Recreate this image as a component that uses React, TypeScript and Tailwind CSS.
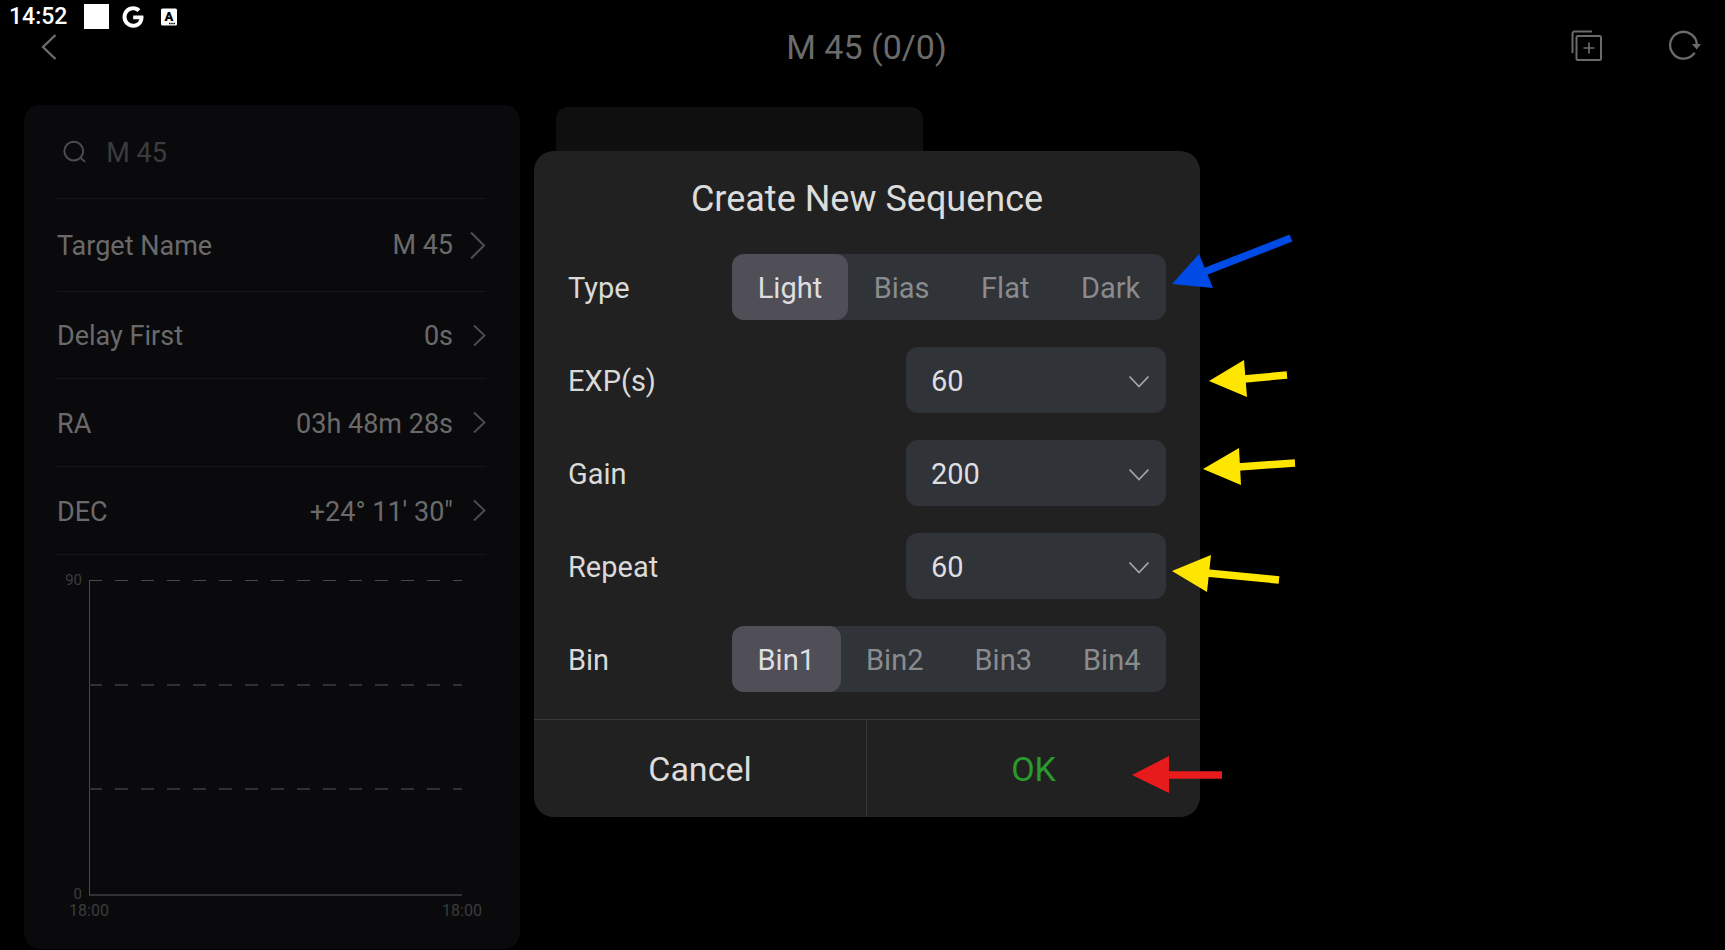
import { useState } from "react";
import { FaGoogle } from "react-icons/fa";

const targetRows = [
  { label: "Target Name", value: "M 45", height: "h-[93px]", large: true },
  { label: "Delay First", value: "0s", height: "h-[87px]", large: false },
  { label: "RA", value: "03h 48m 28s", height: "h-[88px]", large: false },
  { label: "DEC", value: "+24° 11' 30\"", height: "h-[88px]", large: false },
];

const arrows = [
  { color: "#004be6", head: "638,133 665,103 679,137", from: [670, 121], to: [757, 87] },
  { color: "#ffe600", head: "675,230 710,209 713,246", from: [710, 228], to: [753, 224] },
  { color: "#ffe600", head: "669,318 705,297 707,334", from: [704, 316], to: [761, 312] },
  { color: "#ffe600", head: "638,420 677,404 673,441", from: [673, 422], to: [745, 429] },
  { color: "#e81b1c", head: "598,624 635,605 635,642", from: [633, 624], to: [688, 624] },
];

function StatusBar() {
  return (
    <div className="flex h-[29px] items-center pt-1 pl-[9px] text-white">
      <span className="text-[23px] leading-6 font-medium">14:52</span>
      <span className="ml-[17px] size-[25px] bg-white" />
      <FaGoogle className="ml-[13px] size-[22px]" />
      <svg className="ml-[17px]" width="16" height="18" viewBox="0 0 16 18">
        <rect width="16" height="17" y="0.5" rx="1.5" fill="#fff" />
        <text x="8" y="13" textAnchor="middle" fontSize="13" fontWeight="900" fill="#000">
          A
        </text>
        <path d="M8 15.5h6" stroke="#000" strokeWidth="1.5" strokeDasharray="1.5 0.7" />
      </svg>
    </div>
  );
}

function Header() {
  return (
    <header className="grid h-9 grid-cols-[1fr_auto_1fr] items-center pr-6 pl-8 text-[#6b6b6b]">
      <button type="button" aria-label="Back" className="justify-self-start pl-2">
        <svg width="18" height="28" viewBox="0 0 18 28" fill="none" stroke="currentColor" strokeWidth="2.4">
          <path d="M15.5 2 3 14l12.5 12" />
        </svg>
      </button>
      <h1 className="text-[34px] leading-9">M 45 (0/0)</h1>
      <div className="flex items-center justify-self-end pb-1">
        <button type="button" aria-label="Add sequence" className="mr-[66px]">
          <svg width="31" height="31" viewBox="0 0 31 31" fill="none" stroke="currentColor" strokeWidth="2">
            <path d="M21 1.5H3.5a2 2 0 0 0-2 2V23" />
            <rect x="5.5" y="6" width="24.5" height="24" rx="1.5" />
            <path d="M18 12.5v11M12.5 18h11" strokeWidth="1.7" />
          </svg>
        </button>
        <button type="button" aria-label="Refresh">
          <svg width="33" height="31" viewBox="0 0 33 31" fill="none" stroke="currentColor" strokeWidth="2.3">
            <path d="M26.7 22.6A13.4 13.4 0 1 1 28.9 15" />
            <path d="M24 14h9l-4.3 5.5z" fill="currentColor" stroke="none" />
          </svg>
        </button>
      </div>
    </header>
  );
}

function AltitudeChart() {
  return (
    <svg className="mt-4 w-full" viewBox="0 0 429 360" fill="none">
      <path d="M32.5 9v315" stroke="#4a4a4b" />
      <path d="M32 324h373" stroke="#3f3f40" strokeWidth="1.5" />
      <path d="M32 9.5h373" strokeDasharray="13 13" stroke="#4a4a4b" />
      <path d="M32 114h373M32 218h373" strokeDasharray="13 13" strokeWidth="2" stroke="#313132" />
      <g fill="#3c3c3d" fontSize="15">
        <text x="25" y="14" textAnchor="end">90</text>
        <text x="25" y="328" textAnchor="end">0</text>
        <text x="32" y="345" textAnchor="middle" fontSize="16">18:00</text>
        <text x="405" y="345" textAnchor="middle" fontSize="16">18:00</text>
      </g>
    </svg>
  );
}

function TargetPanel() {
  return (
    <section className="w-[496px] shrink-0 rounded-2xl bg-[#0a0a0c] pr-[34px] pb-[18px] pl-[33px] text-[27px] leading-8 text-[#6a6a6b]">
      <label className="flex h-[94px] items-center border-b border-[#171718] pl-[6px]">
        <svg width="26" height="26" viewBox="0 0 26 26" fill="none" stroke="#4c4c4d" strokeWidth="2.2">
          <circle cx="12" cy="12" r="10.5" />
          <path d="m19 19 5.5 5" />
        </svg>
        <input
          aria-label="Search target"
          defaultValue="M 45"
          className="ml-5 w-full min-w-0 bg-transparent pt-[2px] text-[#3c3c3d] outline-none"
        />
      </label>
      {targetRows.map((row) => (
        <button
          key={row.label}
          type="button"
          className={`flex w-full items-center justify-between border-b border-[#171718] ${row.height}`}
        >
          <span className="pt-[2px]">{row.label}</span>
          <span className="flex items-center">
            <span className={row.large ? "" : "pt-[2px]"}>{row.value}</span>
            {row.large ? (
              <svg className="ml-4" width="17" height="29" viewBox="0 0 17 29" fill="none" stroke="#4f4f50" strokeWidth="2">
                <path d="m2 1.5 13 13-13 13" />
              </svg>
            ) : (
              <svg className="ml-5" width="13" height="23" viewBox="0 0 13 23" fill="none" stroke="#4f4f50" strokeWidth="1.8">
                <path d="m1 1.5 10.5 10L1 21.5" />
              </svg>
            )}
          </span>
        </button>
      ))}
      <AltitudeChart />
    </section>
  );
}

function Segmented({ name, options }: { name: string; options: string[] }) {
  const [selected, setSelected] = useState(options[0]);

  return (
    <div className="flex h-[66px] items-center justify-between">
      <span id={name} className="pt-1">{name}</span>
      <div role="radiogroup" aria-labelledby={name} className="flex h-full w-[434px] rounded-xl bg-[#303337]">
        {options.map((option) => (
          <label
            key={option}
            className={`flex flex-auto cursor-pointer items-center justify-center rounded-xl pt-1 ${
              option === selected ? "bg-[#504f57] text-[#dedee0]" : "text-[#8a8b8d]"
            }`}
          >
            <input
              type="radio"
              name={name}
              checked={option === selected}
              onChange={() => setSelected(option)}
              className="sr-only"
            />
            {option}
          </label>
        ))}
      </div>
    </div>
  );
}

function Dropdown({ label, value }: { label: string; value: string }) {
  return (
    <div className="flex h-[66px] items-center justify-between">
      <label htmlFor={label} className="pt-1">{label}</label>
      <div className="relative h-full w-[260px]">
        <select
          id={label}
          defaultValue={value}
          className="h-full w-full appearance-none rounded-xl bg-[#303337] px-[25px] pt-1 text-[#dedee0] outline-none"
        >
          <option>{value}</option>
        </select>
        <svg
          className="pointer-events-none absolute top-7 right-4"
          width="22"
          height="13"
          viewBox="0 0 22 13"
          fill="none"
          stroke="#a3a4a6"
          strokeWidth="1.8"
        >
          <path d="m1.5 1.5 9.5 10 9.5-10" />
        </svg>
      </div>
    </div>
  );
}

function Arrows() {
  return (
    <svg className="pointer-events-none absolute top-0 left-0 overflow-visible" width="666" height="666" aria-hidden="true">
      {arrows.map(({ color, head, from, to }) => (
        <g key={head} fill={color} stroke={color}>
          <polygon points={head} stroke="none" />
          <line x1={from[0]} y1={from[1]} x2={to[0]} y2={to[1]} strokeWidth="7.5" />
        </g>
      ))}
    </svg>
  );
}

function SequenceDialog() {
  return (
    <div className="absolute inset-0 flex items-center justify-center pt-[18px] pl-[9px]">
      <div role="dialog" aria-labelledby="dialog-title" className="relative w-[666px] rounded-[20px] bg-[#212121]">
        <h2 id="dialog-title" className="pt-7 text-center text-[36px] leading-10 text-[#dcdcdc]">
          Create New Sequence
        </h2>
        <div className="flex flex-col gap-[27px] px-[34px] pt-[35px] pb-[27px] text-[29px] text-[#dadada]">
          <Segmented name="Type" options={["Light", "Bias", "Flat", "Dark"]} />
          <Dropdown label="EXP(s)" value="60" />
          <Dropdown label="Gain" value="200" />
          <Dropdown label="Repeat" value="60" />
          <Segmented name="Bin" options={["Bin1", "Bin2", "Bin3", "Bin4"]} />
        </div>
        <div className="grid h-[98px] grid-cols-2 border-t border-[#3a3a3a] text-[34px]">
          <button type="button" className="border-r border-[#3a3a3a] pt-[2px] text-[#dcdcdc]">
            Cancel
          </button>
          <button type="button" className="pt-[2px] text-[#2a9a2c]">
            OK
          </button>
        </div>
        <Arrows />
      </div>
    </div>
  );
}

export default function App() {
  return (
    <div className="relative min-h-screen overflow-hidden bg-black font-['Roboto',sans-serif]">
      <StatusBar />
      <Header />
      <main className="flex items-start gap-9 pt-10 pl-6">
        <TargetPanel />
        <div className="mt-[2px] h-[240px] w-[367px] rounded-xl bg-[#0f0f0f]" />
      </main>
      <SequenceDialog />
    </div>
  );
}
